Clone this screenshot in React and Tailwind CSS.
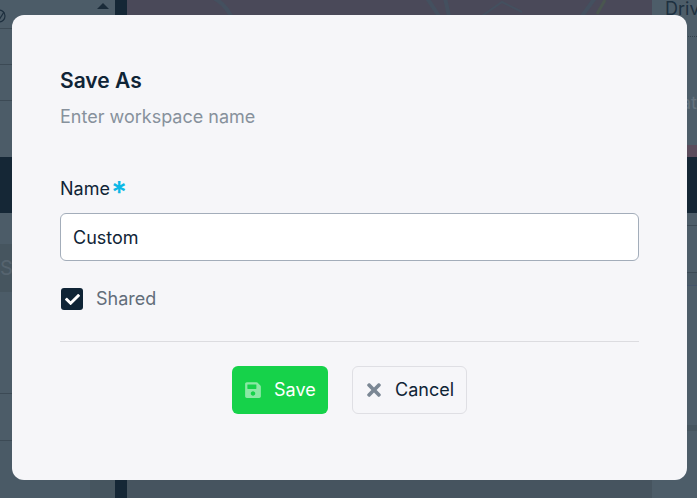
import React from "react";
import { FaSave, FaTimes, FaCheck } from "react-icons/fa";

const font = { fontFamily: "Inter, 'Noto Sans', sans-serif" };

function Background() {
  return (
    <div className="flex h-[498px] w-[697px] overflow-hidden bg-[#46545f]">
      <div className="flex h-full w-[90px] flex-col bg-[#4c5c68]">
        <div className="h-[29px] shrink-0 border-b border-[#3c4a55] pl-0 pt-[9px] text-[#1d2f3e]">
          <svg width="6" height="16" viewBox="0 0 6 16" fill="none" stroke="currentColor" strokeWidth="1.2">
            <circle cx="-1" cy="7" r="6" />
            <path d="M-1 11 L4 3" />
          </svg>
        </div>
        <div className="h-[36px] shrink-0 border-b border-[#3c4a55]" />
        <div className="h-[36px] shrink-0 border-b border-[#3c4a55]" />
        <div className="h-[56px] shrink-0" />
        <div className="h-[56px] shrink-0 bg-[#152736]" />
        <div className="h-[31px] shrink-0" />
        <div className="flex h-[48px] shrink-0 items-center bg-[#46555f] text-[20px] text-[#56646f]">S</div>
        <div className="h-[102px] shrink-0 border-b border-[#3c4a55]" />
        <div className="h-[47px] shrink-0 border-b border-[#3c4a55]" />
        <div className="flex-1 bg-[#4a5a66]" />
      </div>
      <div className="flex h-full w-[25px] flex-col bg-[#46555f]">
        <div className="flex h-[15px] justify-center bg-[#4c5c68] pt-[3px]">
          <div className="h-0 w-0 border-x-[6px] border-b-[6px] border-x-transparent border-b-[#1a2b39]" />
        </div>
      </div>
      <div className="h-full w-[12px] bg-[#152736]" />
      <div className="flex h-full min-w-0 flex-1 flex-col bg-[#46545f]">
        <div className="h-[15px] w-full bg-[#4a4959]">
          <svg width="525" height="15" viewBox="0 0 525 15" fill="none" stroke="#44505f" strokeWidth="4">
            <path d="M85 -3 C 95 2, 100 8, 104 16" />
            <path d="M300 -2 L312 16 M318 -2 L322 16" />
            <path d="M355 16 L375 2 L395 12" strokeWidth="2" />
            <path d="M455 16 L468 -2" />
            <path d="M470 14 L478 0" stroke="#4a5650" strokeWidth="3" />
          </svg>
        </div>
      </div>
      <div className="flex h-full w-[45px] shrink-0 flex-col bg-[#4d5d69]">
        <div className="h-[37px] shrink-0 border-b border-dotted border-[#33414c] pl-[13px] text-[18px] leading-[18px] text-[#1d3040]">Drive</div>
        <div className="flex h-[108px] shrink-0 items-end justify-end pb-[33px] text-[18px] leading-[18px] text-[#65737e]">
          <span className="whitespace-nowrap">at</span>
        </div>
        <div className="h-[12px] shrink-0 bg-[#5a4c5c]" />
        <div className="h-[56px] shrink-0 bg-[#152736]" />
        <div className="h-[13px] shrink-0 border-b border-[#3c4a55]" />
        <div className="h-[47px] shrink-0 border-b border-[#3c4a55]" />
        <div className="h-[13px] shrink-0 border-b border-[#44546a] bg-[#4a5a66]" />
        <div className="h-[139px] shrink-0" />
        <div className="h-[6px] shrink-0 bg-[#46555f]" />
        <div className="flex-1" />
      </div>
    </div>
  );
}

export default function App() {
  return (
    <div className="relative h-[498px] w-[697px] overflow-hidden" style={font}>
      <Background />
      <div className="absolute left-[12px] top-[15px] flex h-[465px] w-[675px] flex-col rounded-[12px] bg-[#f6f6f9] px-[48px] pt-[54px]">
        <h2 className="text-[21px] font-semibold leading-[24px] text-[#0f2436]">Save As</h2>
        <p className="mt-[12px] text-[18px] leading-[24px] text-[#87919c]">Enter workspace name</p>

        <label className="mt-[47px] flex h-[25px] items-start text-[18px] leading-[25px] text-[#0f2436]">
          Name
          <span className="ml-[1px] mt-[1px] text-[30px] font-semibold leading-[30px] text-[#0cb8e6]">*</span>
        </label>
        <input
          readOnly
          value="Custom"
          className="mt-[12px] h-[48px] w-full rounded-[6px] border border-[#a3adba] bg-white px-[12px] text-[18px] text-[#0f2436] outline-none"
        />

        <div className="mt-[27px] flex h-[22px] items-start pl-[1px]">
          <div className="flex h-[22px] w-[22px] items-center justify-center rounded-[3px] bg-[#0f2436] text-white">
            <FaCheck size={15} />
          </div>
          <span className="ml-[13px] text-[18px] leading-[22px] text-[#626d7a]">Shared</span>
        </div>

        <div className="mt-[31px] h-px w-full bg-[#dcdce0]" />

        <div className="mt-[24px] flex justify-center gap-[24px]">
          <button className="flex h-[48px] w-[96px] items-center rounded-[6px] bg-[#16d24a] pl-[12px] text-[18px] text-white">
            <FaSave size={18} className="opacity-50" />
            <span className="ml-[12px] pb-[2px]">Save</span>
          </button>
          <button className="flex h-[48px] w-[115px] items-center rounded-[6px] border border-[#dfdfe4] pl-[11px] text-[18px] text-[#0f2436]">
            <FaTimes size={20} className="text-[#7b8794]" />
            <span className="ml-[11px] pb-[2px]">Cancel</span>
          </button>
        </div>
      </div>
    </div>
  );
}
